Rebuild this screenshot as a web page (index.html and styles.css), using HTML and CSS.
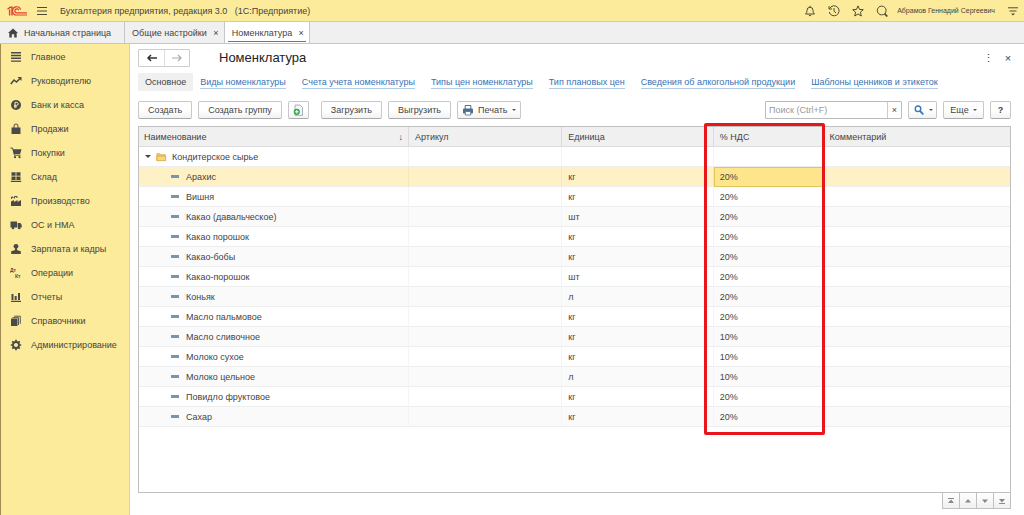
FILE: index.html
```html
<!DOCTYPE html>
<html lang="ru">
<head>
    <meta charset="UTF-8">
    <meta name="viewport" content="width=device-width, initial-scale=1.0">
    <title>Номенклатура - Бухгалтерия предприятия</title>
    <link rel="stylesheet" href="styles.css">
</head>
<body>

    <header class="topbar">
        <svg class="logo" viewBox="0 0 20 10" role="img" aria-label="1С">
            <path d="M0.5 3.2 L3.2 1.2 H5 V9.4 M2.6 3.4 V9.4" fill="none" stroke="#e0402f" stroke-width="1.4"/>
            <path d="M13.6 3.6 A4.1 4.1 0 1 0 10 9 H20 M11.8 4.2 A2 2 0 1 0 10 6.8 H20" fill="none" stroke="#e0402f" stroke-width="1.2"/>
        </svg>
        <button class="icon-button menu-button" aria-label="Меню">
            <svg viewBox="0 0 12 12"><path d="M1 2.5H11M1 6H11M1 9.5H11"/></svg>
        </button>
        <span class="app-name">Бухгалтерия предприятия, редакция 3.0 &nbsp; (1С:Предприятие)</span>
        <div class="top-tools">
            <button class="icon-button" aria-label="Уведомления">
                <svg viewBox="0 0 12 12"><path d="M1.5 9 Q3 8 3 5.5 Q3 2.2 6 2.2 Q9 2.2 9 5.5 Q9 8 10.5 9 Z M6 0.8V2.2 M4.8 10 Q6 12 7.2 10"/></svg>
            </button>
            <button class="icon-button" aria-label="История">
                <svg viewBox="0 0 12 12"><path d="M1.6 3.5 A5 5 0 1 1 1.2 7 M1 1.2 V4 H4 M6 3 V6.2 L8 8"/></svg>
            </button>
            <button class="icon-button" aria-label="Избранное">
                <svg viewBox="0 0 12 12"><path d="M6 0.9 L7.5 4.4 L11.3 4.7 L8.4 7.2 L9.3 11 L6 9 L2.7 11 L3.6 7.2 L0.7 4.7 L4.5 4.4 Z"/></svg>
            </button>
            <button class="icon-button" aria-label="Поиск">
                <svg viewBox="0 0 12 12"><circle cx="5.7" cy="5.5" r="4.4"/><path d="M8.6 8.6 L11.3 11.5" stroke-width="1.7"/></svg>
            </button>
            <a class="user-name" href="#">Абрамов Геннадий Сергеевич</a>
            <button class="icon-button" aria-label="Сервис">
                <svg viewBox="0 0 12 12"><path d="M1 2.8H11M2.5 6H9.5"/><path d="M4 8.5H8L6 10.5Z" fill="#4d4a35" stroke="none"/></svg>
            </button>
        </div>
    </header>

    <nav class="tabs">
        <div class="tab tab-home">
            <svg viewBox="0 0 10 10"><path d="M5 0.5 L10 5 H8.7 V9.5 H6.2 V6.3 H3.8 V9.5 H1.3 V5 H0 Z"/></svg>
            <a href="#">Начальная страница</a>
        </div>
        <div class="tab"><a href="#">Общие настройки</a><button class="tab-close" aria-label="Закрыть">×</button></div>
        <div class="tab active"><a href="#">Номенклатура</a><button class="tab-close" aria-label="Закрыть">×</button></div>
    </nav>

    <div class="workspace">
        <nav class="sidebar">
            <a href="#"><svg viewBox="0 0 12 12"><path d="M1 1h10v1.4H1zM1 3.8h10v1.4H1zM1 6.6h10V8H1zM1 9.4h10v1.4H1z"/></svg>Главное</a>
            <a href="#"><svg viewBox="0 0 12 12"><path d="M0.8 9 L4 5 L6.5 7 L9.5 4" fill="none" stroke="#4a4a48" stroke-width="1.6"/><path d="M7.5 2 H11.5 V6 Z"/></svg>Руководителю</a>
            <a href="#"><svg viewBox="0 0 12 12"><circle cx="6" cy="6" r="5"/><path d="M5 9.2 V3.3 H6.7 A1.5 1.5 0 0 1 6.7 6.3 H4 M4 7.8 H7" fill="none" stroke="#fceb9a"/></svg>Банк и касса</a>
            <a href="#"><svg viewBox="0 0 12 12"><path d="M1.5 4.5h9v6.5h-9z"/><path d="M4 6 V3 A2 2 0 0 1 8 3 V6" fill="none" stroke="#4a4a48"/></svg>Продажи</a>
            <a href="#"><svg viewBox="0 0 12 12"><path d="M0.5 1 H2.5 L4.5 8.2 H10.5" fill="none" stroke="#4a4a48"/><path d="M2.8 2.2 H11.5 L10.2 7 H4Z"/><circle cx="5" cy="10.2" r="1.1"/><circle cx="9.5" cy="10.2" r="1.1"/></svg>Покупки</a>
            <a href="#"><svg viewBox="0 0 12 12"><path d="M1.5 1.2h4.1v3.6H1.5zM6.4 1.2h4.1v3.6H6.4zM1.5 5.6h4.1v3.4H1.5zM6.4 5.6h4.1v3.4H6.4zM0.8 9.8h10.4v1.2H0.8z"/></svg>Склад</a>
            <a href="#"><svg viewBox="0 0 12 12"><path d="M1 11V6.5L4 5V7L7.5 5V7L11 5V11Z"/><path d="M1.5 3.8V2H3V3.2M4.5 3.5V1.5H7V3" fill="none" stroke="#4a4a48"/></svg>Производство</a>
            <a href="#"><svg viewBox="0 0 12 12"><path d="M0.5 2.5H7V8.5H0.5zM7.6 4H10.4L11.7 6V8.5H7.6z"/><circle cx="3" cy="9" r="1.3"/><circle cx="9.2" cy="9" r="1.3"/></svg>ОС и НМА</a>
            <a href="#"><svg viewBox="0 0 12 12"><circle cx="6" cy="3.3" r="2.4"/><path d="M5 5H7V7L10.8 8.3V11H1.2V8.3L5 7Z"/></svg>Зарплата и кадры</a>
            <a href="#"><svg viewBox="0 0 12 12"><text x="0" y="5">Дт</text><text x="5" y="11">Кт</text></svg>Операции</a>
            <a href="#"><svg viewBox="0 0 12 12"><path d="M1.5 3h2v6h-2zM4.7 5h2v4h-2zM8 2h2v7H8zM1 9.7h10v1.2H1z"/></svg>Отчеты</a>
            <a href="#"><svg viewBox="0 0 12 12"><path d="M1 3.5h6.5V11H1z"/><path d="M2.5 2.6H8.5V10M4.2 1.2H10.3V8.8" fill="none" stroke="#4a4a48" stroke-width="0.9"/></svg>Справочники</a>
            <a href="#"><svg viewBox="0 0 12 12"><circle cx="6" cy="6" r="3" fill="none" stroke="#4a4a48" stroke-width="1.8"/><path d="M6 0.8V2.6M6 9.4V11.2M0.8 6H2.6M9.4 6H11.2M2.3 2.3L3.6 3.6M8.4 8.4L9.7 9.7M2.3 9.7L3.6 8.4M8.4 3.6L9.7 2.3" fill="none" stroke="#4a4a48" stroke-width="1.7"/></svg>Администрирование</a>
        </nav>

        <main class="content">
            <div class="title-row">
                <div class="history">
                    <button aria-label="Назад"><svg viewBox="0 0 12 10"><path d="M11 5H2M5 2L2 5L5 8"/></svg></button>
                    <button class="muted" aria-label="Вперед"><svg viewBox="0 0 12 10"><path d="M1 5H10M7 2L10 5L7 8"/></svg></button>
                </div>
                <h1>Номенклатура</h1>
                <div class="window-tools">
                    <button aria-label="Дополнительно">⋮</button>
                    <button aria-label="Закрыть">×</button>
                </div>
            </div>

            <nav class="sections">
                <span class="current">Основное</span>
                <a href="#">Виды номенклатуры</a>
                <a href="#">Счета учета номенклатуры</a>
                <a href="#">Типы цен номенклатуры</a>
                <a href="#">Тип плановых цен</a>
                <a href="#">Сведения об алкогольной продукции</a>
                <a href="#">Шаблоны ценников и этикеток</a>
            </nav>

            <div class="toolbar">
                <button class="btn">Создать</button>
                <button class="btn">Создать группу</button>
                <button class="btn btn-icon" aria-label="Создать копированием">
                    <svg viewBox="0 0 12 12"><path d="M3 1H8L10.5 3.5V11.3H3Z" fill="#f3f6f8" stroke="#8ea0ae" stroke-width="0.8"/><circle cx="4.8" cy="7.8" r="3.1" fill="#35a64a"/><path d="M4.8 6V9.6M3 7.8H6.6" stroke="#fff"/></svg>
                </button>
                <div class="btn-group">
                    <button class="btn">Загрузить</button>
                    <button class="btn">Выгрузить</button>
                    <button class="btn">
                        <svg viewBox="0 0 12 12"><path d="M3.2 5V1.5H8.8V5" fill="#fff" stroke="#4c6f8c"/><rect x="1" y="4.5" width="10" height="5" rx="1" fill="#4c6f8c"/><path d="M3.3 7.5H8.7V11H3.3Z" fill="#fff" stroke="#4c6f8c" stroke-width="0.8"/></svg>
                        Печать <span class="caret"></span>
                    </button>
                </div>
                <form class="search">
                    <input type="text" placeholder="Поиск (Ctrl+F)" aria-label="Поиск">
                    <button type="reset" aria-label="Очистить">×</button>
                </form>
                <button class="btn btn-find" aria-label="Найти">
                    <svg viewBox="0 0 12 12"><circle cx="5" cy="4.8" r="2.8" fill="none" stroke="#3a78b5" stroke-width="1.4"/><path d="M7 7L10.3 10.3" stroke="#3a78b5" stroke-width="1.8"/></svg>
                    <span class="caret"></span>
                </button>
                <button class="btn btn-more">Еще <span class="caret"></span></button>
                <button class="btn btn-help">?</button>
            </div>

            <div class="list">
                <table>
                    <colgroup>
                        <col class="col-name">
                        <col class="col-sku">
                        <col class="col-unit">
                        <col class="col-vat">
                        <col class="col-note">
                    </colgroup>
                    <thead>
                        <tr>
                            <th><div class="sorted">Наименование <span>↓</span></div></th>
                            <th>Артикул</th>
                            <th>Единица</th>
                            <th class="highlight">% НДС</th>
                            <th>Комментарий</th>
                        </tr>
                    </thead>
                    <tbody>
                        <tr>
                            <td>
                                <div class="group">
                                    <span class="toggle"></span>
                                    <svg viewBox="0 0 12 10"><path d="M1 9V1.5H4.5L5.5 2.5H10V4" fill="#f7d070" stroke="#cf9f3c" stroke-width="0.8"/><path d="M1 9V4H10.6V9Z" fill="#fbd676" stroke="#cf9f3c" stroke-width="0.8"/></svg>
                                    Кондитерское сырье
                                </div>
                            </td>
                            <td></td><td></td><td></td><td></td>
                        </tr>
                        <tr class="selected"><td><div class="item">Арахис</div></td><td></td><td>кг</td><td class="cell-active">20%</td><td></td></tr>
                        <tr><td><div class="item">Вишня</div></td><td></td><td>кг</td><td>20%</td><td></td></tr>
                        <tr><td><div class="item">Какао (давальческое)</div></td><td></td><td>шт</td><td>20%</td><td></td></tr>
                        <tr><td><div class="item">Какао порошок</div></td><td></td><td>кг</td><td>20%</td><td></td></tr>
                        <tr><td><div class="item">Какао-бобы</div></td><td></td><td>кг</td><td>20%</td><td></td></tr>
                        <tr><td><div class="item">Какао-порошок</div></td><td></td><td>шт</td><td>20%</td><td></td></tr>
                        <tr><td><div class="item">Коньяк</div></td><td></td><td>л</td><td>20%</td><td></td></tr>
                        <tr><td><div class="item">Масло пальмовое</div></td><td></td><td>кг</td><td>20%</td><td></td></tr>
                        <tr><td><div class="item">Масло сливочное</div></td><td></td><td>кг</td><td>10%</td><td></td></tr>
                        <tr><td><div class="item">Молоко сухое</div></td><td></td><td>кг</td><td>10%</td><td></td></tr>
                        <tr><td><div class="item">Молоко цельное</div></td><td></td><td>л</td><td>10%</td><td></td></tr>
                        <tr><td><div class="item">Повидло фруктовое</div></td><td></td><td>кг</td><td>20%</td><td></td></tr>
                        <tr><td><div class="item">Сахар</div></td><td></td><td>кг</td><td>20%</td><td></td></tr>
                    </tbody>
                </table>
            </div>

            <div class="pager">
                <button aria-label="В начало"><svg viewBox="0 0 8 8"><path d="M1 1H7V2H1zM4 2.5L7 6H1Z"/></svg></button>
                <button aria-label="Вверх"><svg viewBox="0 0 8 8"><path d="M4 2L7 5.5H1Z"/></svg></button>
                <button aria-label="Вниз"><svg viewBox="0 0 8 8"><path d="M4 6L7 2.5H1Z"/></svg></button>
                <button aria-label="В конец"><svg viewBox="0 0 8 8"><path d="M1 6H7V7H1zM4 5.5L7 2H1Z"/></svg></button>
            </div>
        </main>
    </div>

</body>
</html>
```
FILE: styles.css
```css
*, *::before, *::after {
    box-sizing: border-box;
}
body {
    margin: 0;
    min-height: 100vh;
    display: flex;
    flex-direction: column;
    font-family: 'Liberation Sans', Arial, sans-serif;
    font-size: 9px;
    line-height: 12px;
    color: #444444;
    background-color: #ffffff;
}
button, input {
    font: inherit;
    color: inherit;
}
button {
    padding: 0;
    cursor: pointer;
}
a {
    color: inherit;
    text-decoration: none;
}
svg {
    flex: none;
}

/* top bar */
.topbar {
    display: flex;
    align-items: center;
    height: 22px;
    padding: 0 5px 0 7px;
    background-color: #fceb9a;
    border-bottom: 1px solid #d8cc92;
}
.logo {
    width: 20px;
    height: 10px;
}
.icon-button {
    display: flex;
    border: none;
    background: none;
}
.icon-button svg {
    width: 12px;
    height: 12px;
    fill: none;
    stroke: #4d4a35;
}
.menu-button {
    margin: 0 12px 0 9px;
}
.top-tools {
    display: flex;
    align-items: center;
    gap: 12px;
    margin-left: auto;
}
.user-name {
    font-size: 7px;
    margin-left: -3px;
}

/* open windows */
.tabs {
    display: flex;
    height: 22px;
    background-color: #f0f0f0;
    border-bottom: 1px solid #c6c6c6;
}
.tab {
    display: flex;
    align-items: center;
    gap: 5px;
    padding: 0 4px 0 7px;
    border-right: 1px solid #c6c6c6;
}
.tab-home {
    gap: 6px;
    padding: 0 13px 0 8px;
}
.tab-home svg {
    width: 10px;
    height: 10px;
    fill: #444444;
}
.tab.active {
    position: relative;
    background-color: #ffffff;
}
.tab.active::after {
    content: '';
    position: absolute;
    left: 3px;
    right: 3px;
    bottom: 1px;
    height: 1px;
    background-color: #2f9e63;
}
.tab-close {
    width: 8px;
    border: none;
    background: none;
}

.workspace {
    flex: 1;
    display: flex;
}

/* sections panel */
.sidebar {
    flex: none;
    width: 130px;
    padding-top: 1px;
    background-color: #fceb9a;
    border-left: 1px solid #a08c50;
    border-right: 1px solid #d8d2b0;
}
.sidebar a {
    display: flex;
    align-items: center;
    gap: 9px;
    height: 24px;
    padding-left: 9px;
}
.sidebar svg {
    width: 12px;
    height: 12px;
    fill: #4a4a48;
}
.sidebar text {
    font-size: 5px;
    font-weight: bold;
}

.content {
    flex: 1;
    min-width: 0;
    display: flex;
    flex-direction: column;
    padding: 5px 13px 6px 8px;
}
.title-row {
    display: flex;
    align-items: center;
    height: 18px;
}
.history {
    display: flex;
    border: 1px solid #cccccc;
    border-radius: 1px;
}
.history button {
    display: flex;
    align-items: center;
    justify-content: center;
    width: 25px;
    height: 16px;
    border: none;
    background: none;
}
.history button + button {
    border-left: 1px solid #dddddd;
}
.history svg {
    width: 12px;
    height: 10px;
    fill: none;
    stroke: #333333;
    stroke-width: 1.5;
}
.history .muted svg {
    stroke: #aaaaaa;
    stroke-width: 1.2;
}
h1 {
    margin: 0 0 0 29px;
    font-size: 13px;
    line-height: 16px;
    font-weight: normal;
    color: #222222;
}
.window-tools {
    display: flex;
    gap: 10px;
    margin: 0 -2px 0 auto;
}
.window-tools button {
    width: 10px;
    border: none;
    background: none;
    font-size: 11px;
}

.sections {
    display: flex;
    align-items: center;
    gap: 16px;
    height: 18px;
    margin: 6px 0 10px;
    white-space: nowrap;
}
.sections a {
    color: #3672b5;
    border-bottom: 1px solid #b4cbe4;
}
.current {
    padding: 3px 7px;
    margin-right: -9px;
    border-radius: 1px;
    background-color: #f0f0f0;
}

/* commands */
.toolbar {
    display: flex;
    gap: 6px;
    height: 18px;
    margin-bottom: 7px;
}
.btn {
    display: flex;
    align-items: center;
    justify-content: center;
    gap: 4px;
    height: 18px;
    padding: 0 9px;
    white-space: nowrap;
    border: 1px solid #c8c8c8;
    border-bottom-color: #aaaaaa;
    border-radius: 2px;
    background: linear-gradient(#ffffff 50%, #f2f2f2);
}
.btn:hover {
    background: #f0f0f0;
}
.btn svg {
    width: 12px;
    height: 12px;
}
.btn-icon {
    width: 21px;
    padding: 0;
}
.btn-group {
    display: flex;
    gap: 6px;
    margin-left: 6px;
}
.btn-group .btn:last-child {
    padding: 0 4px;
}
.caret {
    border: 2px solid transparent;
    border-top-color: #555555;
    border-bottom: none;
}
.search {
    display: flex;
    width: 137px;
    margin-left: auto;
    border: 1px solid #bbbbbb;
    border-radius: 1px;
}
.search input {
    flex: 1;
    min-width: 0;
    padding: 0 3px;
    border: none;
    outline: none;
}
.search input::placeholder {
    color: #999999;
}
.search button {
    width: 14px;
    border: none;
    border-left: 1px solid #cccccc;
    background: none;
}
.btn-find {
    width: 29px;
    padding: 0;
}
.btn-more {
    width: 41px;
    padding: 0;
}
.btn-help {
    width: 21px;
    padding: 0;
    font-weight: bold;
}

/* items list */
.list {
    flex: 1;
    border: 1px solid #c0c0c0;
}
table {
    width: 100%;
    table-layout: fixed;
    border-collapse: separate;
    border-spacing: 0;
}
.col-name {
    width: 31%;
}
.col-sku {
    width: 17.6%;
}
.col-unit {
    width: 17.4%;
}
.col-vat {
    width: 12.6%;
}
th {
    height: 20px;
    padding: 0 6px;
    text-align: left;
    font-weight: normal;
    background-color: #f0f0f0;
    border-right: 1px solid #dcdcdc;
    border-bottom: 1px solid #dcdcdc;
}
th:first-child {
    padding: 0 5px;
}
th:last-child, td:last-child {
    border-right: none;
}
td {
    height: 20px;
    padding: 0 6px;
    border-right: 1px solid #f4f4f4;
    border-bottom: 1px solid #eeeeee;
}
tbody tr:nth-child(even) {
    background-color: #fafafa;
}
tbody tr.selected {
    background-color: #fff1c6;
}
.selected td {
    border-right-color: #f8e8b8;
}
.selected .cell-active {
    padding: 0 5px;
    background-color: #fde58c;
    border: 1px solid #e3c65a;
}
.sorted {
    display: flex;
    justify-content: space-between;
}
.group {
    display: flex;
    align-items: center;
    gap: 5px;
}
.group svg {
    width: 11px;
    height: 10px;
}
.toggle {
    border: 3px solid transparent;
    border-top-color: #444444;
    border-bottom: none;
}
.item {
    display: flex;
    align-items: center;
    gap: 7px;
    padding-left: 26px;
}
.item::before {
    content: '';
    width: 8px;
    height: 3px;
    background-color: #7895ab;
}
.highlight {
    position: relative;
}
/* red frame round the VAT column */
.highlight::after {
    content: '';
    position: absolute;
    z-index: 1;
    top: -4px;
    left: -10px;
    right: -2px;
    height: 312px;
    border: 3px solid #e8151b;
    border-radius: 2px;
    pointer-events: none;
}

.pager {
    display: flex;
    align-self: flex-end;
    border: 1px solid #c0c0c0;
    border-top: none;
}
.pager button {
    display: flex;
    align-items: center;
    justify-content: center;
    width: 16px;
    height: 15px;
    border: none;
    background: linear-gradient(#ffffff, #f0f0f0);
}
.pager button + button {
    width: 17px;
    border-left: 1px solid #c0c0c0;
}
.pager svg {
    width: 8px;
    height: 8px;
    fill: #888888;
}
```
